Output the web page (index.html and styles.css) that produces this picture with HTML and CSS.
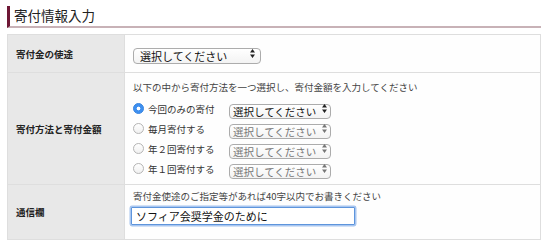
FILE: index.html
```html
<!DOCTYPE html>
<html>
  <head>
    <title>寄付情報入力</title>
    <link rel="stylesheet" href="styles.css">
  </head>
  <body>
    <div id="donation">
      <h2 class="section-title">寄付情報入力</h2>

      <table class="form-table">
        <tr class="row-purpose">
          <th>寄付金の使途</th>
          <td>
            <span class="select-wrap select-wide">
              <select><option>選択してください</option></select>
              <svg class="arrows" width="5" height="9" viewBox="0 0 5 9"><path d="M2.5 0L5 3.5H0z M2.5 9L5 5.5H0z" fill="#222"/></svg>
            </span>
          </td>
        </tr>
        <tr class="row-method">
          <th>寄付方法と寄付金額</th>
          <td>
            <p class="note">以下の中から寄付方法を一つ選択し、寄付金額を入力してください</p>
            <div class="choice">
              <label><input type="radio" name="method" checked>今回のみの寄付</label>
              <span class="select-wrap">
                <select><option>選択してください</option></select>
                <svg class="arrows" width="5" height="9" viewBox="0 0 5 9"><path d="M2.5 0L5 3.5H0z M2.5 9L5 5.5H0z" fill="#222"/></svg>
              </span>
            </div>
            <div class="choice off">
              <label><input type="radio" name="method">毎月寄付する</label>
              <span class="select-wrap">
                <select><option>選択してください</option></select>
                <svg class="arrows" width="5" height="9" viewBox="0 0 5 9"><path d="M2.5 0L5 3.5H0z M2.5 9L5 5.5H0z" fill="#777"/></svg>
              </span>
            </div>
            <div class="choice off">
              <label><input type="radio" name="method">年２回寄付する</label>
              <span class="select-wrap">
                <select><option>選択してください</option></select>
                <svg class="arrows" width="5" height="9" viewBox="0 0 5 9"><path d="M2.5 0L5 3.5H0z M2.5 9L5 5.5H0z" fill="#777"/></svg>
              </span>
            </div>
            <div class="choice off">
              <label><input type="radio" name="method">年１回寄付する</label>
              <span class="select-wrap">
                <select><option>選択してください</option></select>
                <svg class="arrows" width="5" height="9" viewBox="0 0 5 9"><path d="M2.5 0L5 3.5H0z M2.5 9L5 5.5H0z" fill="#777"/></svg>
              </span>
            </div>
          </td>
        </tr>
        <tr class="row-message">
          <th>通信欄</th>
          <td>
            <p class="note">寄付金使途のご指定等があれば40字以内でお書きください</p>
            <input class="message" type="text" value="ソフィア会奨学金のために">
          </td>
        </tr>
      </table>
    </div>
  </body>
</html>
```

FILE: styles.css
```css
body {
  margin: 0;
  background: #fff;
  font-family: "Noto Sans CJK JP", "Noto Sans", sans-serif;
  color: #222;
}
#donation {
  width: 534px;
  margin: 0 0 0 7px;
  padding-top: 6px;
}
.section-title {
  margin: 0;
  height: 20px;
  padding-left: 4px;
  border-left: 3px solid #6e1735;
  border-bottom: 2px solid #c8b2b7;
  font-size: 13.5px;
  font-weight: normal;
  line-height: 18px;
  color: #222;
}
.form-table {
  margin-top: 6px;
  width: 534px;
  border-collapse: collapse;
  table-layout: fixed;
}
.form-table th,
.form-table td {
  border: 1px solid #dedede;
  vertical-align: middle;
}
.form-table th {
  width: 108px;
  padding: 0 0 0 8px;
  background: #e8e8e8;
  text-align: left;
  font-size: 9.5px;
  font-weight: 600;
  color: #222;
}
.form-table td {
  padding: 0 0 0 8px;
  background: #fefefe;
}
.row-purpose td {
  height: 37px;
}
.row-method td {
  height: 100px;
  padding-top: 6px;
  padding-bottom: 5px;
}
.row-message td {
  height: 32px;
  padding-top: 5px;
  padding-bottom: 13px;
}
.note {
  margin: 0;
  font-size: 9.5px;
  line-height: 14px;
  color: #444;
}
.row-method .note {
  margin-bottom: 5px;
}
.row-message .note {
  line-height: 12px;
}
.choice {
  display: flex;
  align-items: center;
  height: 20px;
}
.choice label {
  display: flex;
  align-items: center;
  width: 96px;
  font-size: 9.5px;
  color: #333;
}
.choice input[type="radio"] {
  -webkit-appearance: none;
  appearance: none;
  box-sizing: border-box;
  width: 11px;
  height: 11px;
  margin: 0 4px 0 0;
  border: 1px solid #b5b5b5;
  border-radius: 50%;
  background: linear-gradient(#fff, #f0f0f0);
}
.choice input[type="radio"]:checked {
  border: 1px solid #3b86e0;
  background: radial-gradient(circle, #fff 0 1.6px, #3d8ff0 2.2px);
}
.select-wrap {
  position: relative;
  display: inline-block;
}
.select-wrap select {
  -webkit-appearance: none;
  appearance: none;
  box-sizing: border-box;
  width: 102px;
  height: 15px;
  margin: 0;
  padding: 0 0 0 3px;
  border: 1px solid #acacac;
  border-radius: 4px;
  background: linear-gradient(#fff, #f3f3f3);
  font-family: "Noto Sans CJK JP", sans-serif;
  font-size: 10.5px;
  line-height: 13px;
  color: #111;
}
.select-wide select {
  width: 128px;
  height: 16px;
  padding-left: 6px;
  font-size: 11px;
}
.off select {
  color: #777;
}
.arrows {
  position: absolute;
  right: 4px;
  top: 50%;
  margin-top: -4.5px;
}
.select-wide .arrows {
  right: 6px;
}
.message {
  box-sizing: border-box;
  width: 224px;
  height: 18px;
  margin: 0 0 0 -2px;
  padding: 0 4px;
  border: 1px solid #5e95dc;
  border-radius: 1px;
  box-shadow: 0 0 0 1.5px rgba(110, 160, 230, 0.6);
  outline: none;
  font-family: "Noto Sans CJK JP", sans-serif;
  font-size: 11px;
  color: #111;
}
```
